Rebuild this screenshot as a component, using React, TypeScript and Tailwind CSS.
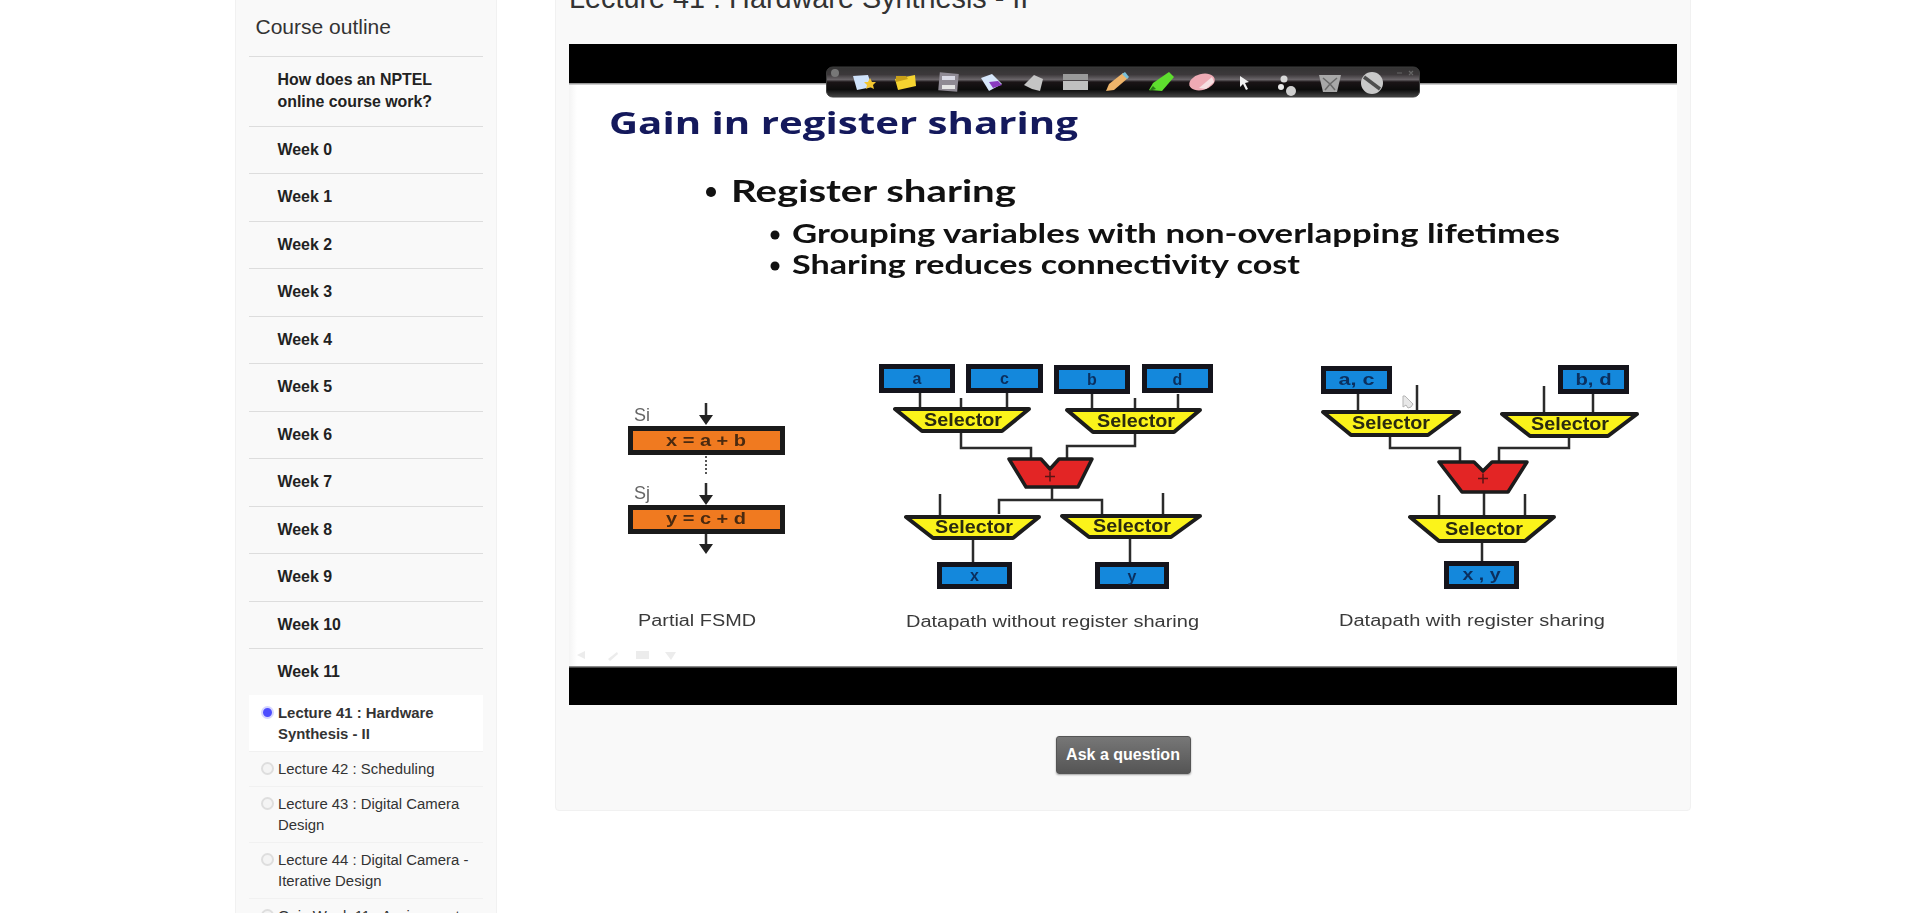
import React from 'react';

const weeks = ['Week 0', 'Week 1', 'Week 2', 'Week 3', 'Week 4', 'Week 5', 'Week 6', 'Week 7', 'Week 8', 'Week 9', 'Week 10', 'Week 11'];

const lectures = [
  { title: 'Lecture 41 : Hardware Synthesis - II', active: true },
  { title: 'Lecture 42 : Scheduling' },
  { title: 'Lecture 43 : Digital Camera Design' },
  { title: 'Lecture 44 : Digital Camera - Iterative Design' },
  { title: 'Quiz Week 11 : Assignment 11' },
];

function Sidebar() {
  return (
    <aside className="w-[262px] shrink-0 -mt-[10px] bg-[#f9f9f9] border border-[#f1f1f1] rounded-[4px] pb-8">
      <h3 className="pl-[19.5px] pt-[23px] pb-[15.5px] text-[21px] leading-[26px] text-[#333] font-normal">Course outline</h3>
      <ul className="mx-[13px] text-[#222]">
        <li className="border-t border-[#dddddd] pl-[28.5px] pr-4 py-[12.5px] text-[15.9px] leading-[22px] font-bold">
          How does an NPTEL online course work?
        </li>
        {weeks.map((w) => (
          <li key={w} className="border-t border-[#dddddd] pl-[28.5px] py-[12.25px] text-[15.9px] leading-[22px] font-bold">
            {w}
          </li>
        ))}
      </ul>
      <ul className="mx-[13px] -mt-[0.5px]">
        {lectures.map((l) => (
          <li
            key={l.title}
            className={`flex gap-[4px] pl-[12px] pr-2 text-[14.9px] leading-[21px] ${
              l.active ? 'pt-[8px] pb-[6px] bg-white font-bold text-[#333]' : 'pt-[7px] pb-[6px] border-t border-[#f1f1f1] text-[#333]'
            }`}
          >
            <span
              className={`w-[13px] h-[13px] mt-[3px] shrink-0 rounded-full border-2 ${
                l.active ? 'bg-[#4d4dff] border-[#d5d5ff]' : 'bg-[#f4f4f4] border-[#dedede]'
              }`}
            />
            <span>{l.title}</span>
          </li>
        ))}
      </ul>
    </aside>
  );
}

function Box({ x1, y1, x2, y2, label, lx, ly, size = 16, tl }: { x1: number; y1: number; x2: number; y2: number; label: string; lx?: number; ly: number; size?: number; tl?: number }) {
  return (
    <g>
      <rect x={x1 + 2.5} y={y1 + 2.5} width={x2 - x1 - 5} height={y2 - y1 - 5} fill="#1488dc" stroke="#14141c" strokeWidth="5" />
      <text x={lx ?? (x1 + x2) / 2} y={ly} textAnchor="middle" fontSize={size} fontWeight="700" fill="#0b2f5e" textLength={tl} lengthAdjust={tl ? 'spacingAndGlyphs' : undefined}>{label}</text>
    </g>
  );
}

function Selector({ t1, t2, b1, b2, y1, y2, lx, ly }: { t1: number; t2: number; b1: number; b2: number; y1: number; y2: number; lx: number; ly: number }) {
  return (
    <g>
      <polygon points={`${t1},${y1 + 2} ${t2},${y1 + 2} ${b2},${y2 - 2} ${b1},${y2 - 2}`} fill="#fbf31a" stroke="#1c1c1c" strokeWidth="4" strokeLinejoin="round" />
      <text x={lx} y={ly} textAnchor="middle" fontSize="18" fontWeight="700" fill="#2a2a10" textLength="78" lengthAdjust="spacingAndGlyphs">Selector</text>
    </g>
  );
}

function Adder({ x1, x2, b1, b2, n, y1, y2, ny }: { x1: number; x2: number; b1: number; b2: number; n: number; y1: number; y2: number; ny: number }) {
  return (
    <g>
      <polygon
        points={`${x1},${y1} ${n - 9},${y1} ${n},${ny} ${n + 9},${y1} ${x2},${y1} ${b2},${y2} ${b1},${y2}`}
        fill="#e32525"
        stroke="#1c1c1c"
        strokeWidth="3.5"
        strokeLinejoin="round"
      />
      <path d={`M${n - 5} ${ny + 7.5}h10M${n} ${ny + 2.5}v10`} stroke="#5a1414" strokeWidth="1.5" />
    </g>
  );
}

function Wires({ d }: { d: string }) {
  return <path d={d} fill="none" stroke="#2b2b2b" strokeWidth="2.5" />;
}

function ToolbarIcons() {
  return (
    <g>
      <polygon points="853,76 868,75 872,87 857,90" fill="#cfe2fa" />
      <polygon points="870,78 872,82 876,82 873,85 874,89 870,87 866,89 867,85 864,82 868,82" fill="#f2c530" />
      <polygon points="895,79 915,75 916,86 898,90" fill="#f5d330" />
      <polygon points="896,76 906,76 908,79 896,82" fill="#c9a018" />
      <rect x="939" y="73" width="19" height="18" fill="#8f8a94" transform="rotate(5 948 82)" />
      <rect x="942" y="76" width="13" height="4" fill="#d9d9e5" />
      <rect x="942" y="85" width="13" height="4" fill="#e5e5e5" />
      <polygon points="981,78 992,74 1002,84 989,91" fill="#d6e6fa" />
      <polygon points="989,82 998,81 1002,85 993,88" fill="#8a3cc0" />
      <polygon points="1024,85 1034,75 1043,79 1040,91 1032,89" fill="#c4c4c4" />
      <rect x="1063" y="74" width="25" height="6" fill="#9a9a9a" />
      <rect x="1063" y="81" width="25" height="9" fill="#c0c0c0" />
      <path d="M1106 91l3-7 14-11 5 5-14 12z" fill="#eeb46a" />
      <path d="M1122 74l3-2 4 5-2 2z" fill="#7ac0d8" />
      <path d="M1149 90l4-7 16-11 5 5-12 14z" fill="#5ede2e" />
      <path d="M1149 91l4-5 3 3z" fill="#2a7a18" />
      <ellipse cx="1202" cy="82" rx="13" ry="8" fill="#eeaab4" transform="rotate(-15 1202 82)" />
      <path d="M1199 88l13-11 2 5-8 7z" fill="#f6dfe2" />
      <path d="M1240 76v11l3-3 3 6 2-1-3-6 4-1z" fill="#f0f0f0" />
      <circle cx="1284" cy="79" r="3.5" fill="#d8d8d8" />
      <circle cx="1281" cy="87" r="3" fill="#e8e8e8" />
      <circle cx="1291" cy="91" r="5" fill="#cfcfcf" />
      <polygon points="1319,75 1341,75 1337,92 1323,92" fill="#a8a8a8" />
      <path d="M1323 78l7 6 7-6M1325 90l5-6 5 6" stroke="#6a6a6a" strokeWidth="1.5" fill="none" />
      <circle cx="1372" cy="83" r="11" fill="#c9c9c9" />
      <path d="M1364 77l16 12" stroke="#4e4e4e" strokeWidth="3.5" />
      <circle cx="835" cy="73" r="4" fill="#777" />
      <path d="M1397 73h5M1409 71l4 4m0-4l-4 4" stroke="#666" strokeWidth="1.2" />
    </g>
  );
}

function Slide() {
  return (
    <svg viewBox="569 44 1108 661" className="block w-full h-full blur-[0.5px]">
      <defs>
        <linearGradient id="barGrad" x1="0" y1="0" x2="0" y2="1">
          <stop offset="0" stopColor="#333" />
          <stop offset="0.25" stopColor="#3c383a" />
          <stop offset="0.42" stopColor="#6a6569" />
          <stop offset="0.5" stopColor="#1a1416" />
          <stop offset="0.75" stopColor="#0c0c0c" />
          <stop offset="1" stopColor="#454545" />
        </linearGradient>
        <linearGradient id="edgeGrad" x1="0" y1="0" x2="1" y2="0">
          <stop offset="0" stopColor="#f4f4f4" />
          <stop offset="1" stopColor="#ffffff" />
        </linearGradient>
      </defs>

      <rect x="565" y="40" width="1116" height="669" fill="#000" />
      <rect x="565" y="83" width="1116" height="584" fill="#fff" />
      <rect x="569" y="83" width="8" height="584" fill="url(#edgeGrad)" />
      <rect x="565" y="83" width="1116" height="1.5" fill="#9a9a9a" />
      <rect x="565" y="666" width="1116" height="1.5" fill="#8a8a8a" />

      <rect x="826.5" y="67" width="593" height="30" rx="6" fill="url(#barGrad)" stroke="#3c3c3c" />
      <ToolbarIcons />

      <text x="609" y="134" fontSize="31" fontWeight="700" fill="#14195c" textLength="469" lengthAdjust="spacingAndGlyphs" className="[font-family:'Open_Sans',sans-serif]">Gain in register sharing</text>
      <g className="[font-family:'Lato',sans-serif]">
        <circle cx="711" cy="192" r="5" fill="#111" />
        <text x="731" y="202" fontSize="30" fontWeight="700" fill="#111" textLength="285" lengthAdjust="spacingAndGlyphs">Register sharing</text>
        <circle cx="775" cy="235" r="4.5" fill="#111" />
        <text x="792" y="242.5" fontSize="27" fontWeight="700" fill="#111" textLength="768" lengthAdjust="spacingAndGlyphs">Grouping variables with non-overlapping lifetimes</text>
        <circle cx="775" cy="266" r="4.5" fill="#111" />
        <text x="792" y="274" fontSize="27" fontWeight="700" fill="#111" textLength="508" lengthAdjust="spacingAndGlyphs">Sharing reduces connectivity cost</text>
      </g>

      {/* partial FSMD */}
      <g transform="translate(0 1)">
        <text x="634" y="420" fontSize="18" fill="#666">Si</text>
        <text x="634" y="498" fontSize="18" fill="#666">Sj</text>
        <Wires d="M706 402v14M706 482v14M706 533v12" />
        <path d="M699 414h14l-7 10zM699 494h14l-7 10zM699 543h14l-7 10z" fill="#222" />
        <path d="M706 455v18" stroke="#555" strokeWidth="2" strokeDasharray="2 2" />
        <rect x="630.5" y="427.5" width="152" height="24" fill="#f07a20" stroke="#1a1a1a" strokeWidth="5" />
        <rect x="630.5" y="506.5" width="152" height="24" fill="#f07a20" stroke="#1a1a1a" strokeWidth="5" />
        <text x="706" y="445" textAnchor="middle" fontSize="17" fontWeight="700" fill="#4a2a10" textLength="80" lengthAdjust="spacingAndGlyphs">x = a + b</text>
        <text x="706" y="523" textAnchor="middle" fontSize="17" fontWeight="700" fill="#4a2a10" textLength="80" lengthAdjust="spacingAndGlyphs">y = c + d</text>
        <text x="638" y="625" fontSize="16" fill="#3a3a3a" textLength="118" lengthAdjust="spacingAndGlyphs">Partial FSMD</text>
      </g>

      {/* datapath without sharing */}
      <g transform="translate(0 1)">
        <Wires d="M920 392v14M961 397v9M1007 392v14M1092 393v14M1135 397v10M1178 393v14M961 432v15h70v10M1135 433v12h-68v12M1052 486v13M999 513v-14h103v14M940 493v21M1163 492v21M973 539v22M1130 538v23" />
        <Box x1={879} y1={363} x2={955} y2={392} label="a" ly={383} />
        <Box x1={966} y1={363} x2={1043} y2={392} label="c" ly={383} />
        <Box x1={1054} y1={364} x2={1130} y2={393} label="b" ly={384} />
        <Box x1={1142} y1={363} x2={1213} y2={392} label="d" ly={384} />
        <Selector t1={895} t2={1029} b1={922} b2={1002} y1={406} y2={432} lx={963} ly={425} />
        <Selector t1={1067} t2={1200} b1={1093} b2={1174} y1={407} y2={433} lx={1136} ly={426} />
        <Adder x1={1009} x2={1092} b1={1026} b2={1078} n={1050} y1={458} y2={486} ny={468} />
        <Selector t1={906} t2={1039} b1={933} b2={1013} y1={514} y2={539} lx={974} ly={532} />
        <Selector t1={1062} t2={1200} b1={1089} b2={1171} y1={513} y2={538} lx={1132} ly={531} />
        <Box x1={937} y1={561} x2={1012} y2={588} label="x" ly={580} />
        <Box x1={1095} y1={561} x2={1169} y2={588} label="y" ly={581} />
        <text x="906" y="626" fontSize="16" fill="#3a3a3a" textLength="293" lengthAdjust="spacingAndGlyphs">Datapath without register sharing</text>
      </g>

      {/* datapath with sharing */}
      <g transform="translate(0 1)">
        <Wires d="M1358 393v16M1417 384v25M1544 385v26M1593 393v18M1390 436v11h70v13M1569 437v10h-70v13M1484 491v23M1439 494v20M1525 493v21M1482 542v18" />
        <Box x1={1321} y1={365} x2={1392} y2={393} label="a, c" ly={384} tl={36} />
        <Box x1={1558} y1={364} x2={1629} y2={393} label="b, d" ly={384} tl={36} />
        <Selector t1={1323} t2={1459} b1={1351} b2={1428} y1={409} y2={436} lx={1391} ly={428} />
        <Selector t1={1502} t2={1637} b1={1530} b2={1608} y1={411} y2={437} lx={1570} ly={429} />
        <Adder x1={1439} x2={1527} b1={1462} b2={1508} n={1483} y1={461} y2={491} ny={470} />
        <Selector t1={1410} t2={1554} b1={1439} b2={1525} y1={514} y2={542} lx={1484} ly={534} />
        <Box x1={1444} y1={560} x2={1519} y2={588} label="x , y" ly={579} tl={38} />
        <path d="M1403 395v11l3-2 2 3 3-1 2-3-4-4-4-4z" fill="#e8e8e8" stroke="#b5b5b5" />
        <text x="1339" y="625" fontSize="16" fill="#3a3a3a" textLength="266" lengthAdjust="spacingAndGlyphs">Datapath with register sharing</text>
      </g>

      {/* faint presenter controls */}
      <g fill="#ececec">
        <path d="M577 655l8-4v8zM608 659l9-7 1 2-8 7z" />
        <rect x="636" y="651" width="13" height="8" />
        <path d="M665 652h11l-5 8z" />
      </g>
    </svg>
  );
}

export default function App() {
  return (
    <div className="h-[913px] overflow-hidden bg-white flex items-start pl-[235px] [font-family:'Liberation_Sans',Arial,sans-serif]">
      <Sidebar />
      <main className="ml-[58px] w-[1136px] shrink-0 -mt-[20px] h-[831px] bg-[#f9f9f9] border border-[#f1f1f1] rounded-[4px] px-[13px]">
        <h2 className="text-[28.8px] leading-[30px] text-[#333] font-normal pt-[2px] h-[63px]">Lecture 41 : Hardware Synthesis - II</h2>
        <div className="w-[1108px] h-[661px] overflow-hidden">
          <Slide />
        </div>
        <div className="flex justify-center mt-[31px]">
          <button className="w-[135px] h-[38px] rounded-[3px] border border-[#555] bg-gradient-to-b from-[#777777] to-[#555555] text-white font-bold text-[16px] shadow-[0_1px_2px_rgba(0,0,0,0.35)]">
            Ask a question
          </button>
        </div>
      </main>
    </div>
  );
}
